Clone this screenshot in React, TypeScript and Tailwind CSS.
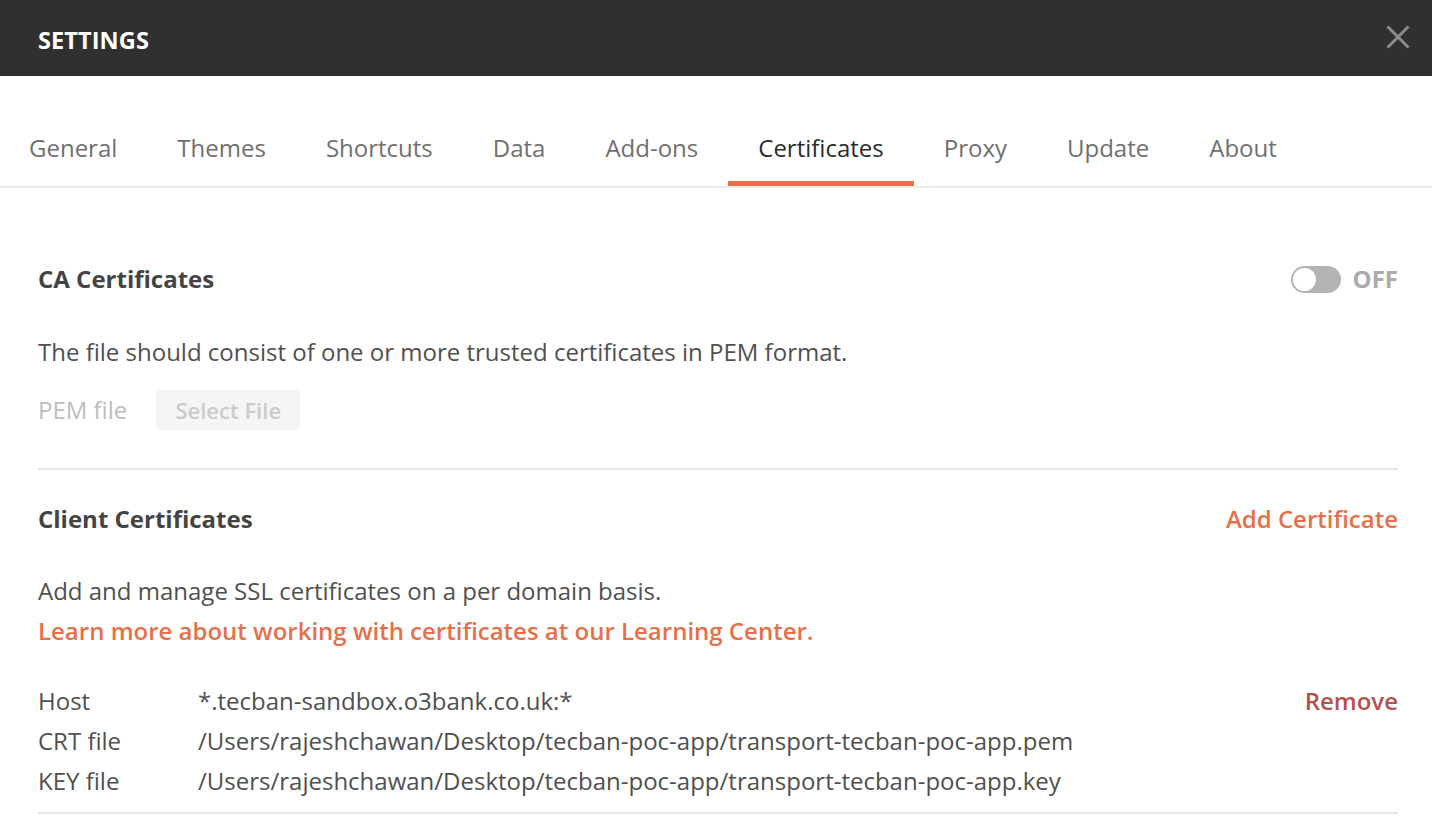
import React from "react";

const tabs = ["General", "Themes", "Shortcuts", "Data", "Add-ons", "Certificates", "Proxy", "Update", "About"];

export default function App() {
  return (
    <div className="w-[1432px] h-[828px] bg-white overflow-hidden" style={{ fontFamily: '"Open Sans", sans-serif' }}>
      <div className="h-[76px] bg-[#303030] flex items-center justify-between pl-[38px] pr-[22px]">
        <div className="text-white font-bold text-[23.5px] leading-[32px] pt-[3px] tracking-[0.1px]">SETTINGS</div>
        <svg width="24" height="24" viewBox="0 0 24 24" className="text-[#8c8c8c] mb-[3px]">
          <path d="M1.5 1.5 L22.5 22.5 M22.5 1.5 L1.5 22.5" stroke="currentColor" strokeWidth="3" />
        </svg>
      </div>
      <div className="mt-[56px] flex border-b-2 border-[#ebebeb] ml-[-1px]">
        {tabs.map((t) => (
          <div
            key={t}
            className={
              "px-[30px] text-[24px] leading-[32px] pb-[17px] border-b-[5px] " +
              (t === "Certificates" ? "text-[#2b2b2b] border-[#e5704a]" : "text-[#707070] border-transparent")
            }
          >
            {t}
          </div>
        ))}
      </div>
      <div className="pl-[38px] pr-[34px]">
        <div className="mt-[75px] flex items-center justify-between h-[32px]">
          <div className="text-[24px] font-bold text-[#444444] leading-[32px]">CA Certificates</div>
          <div className="flex items-center gap-[12px]">
            <div className="w-[50px] h-[27px] rounded-full bg-[#b3b3b3] relative">
              <div className="absolute left-[2px] top-[2px] w-[23px] h-[23px] rounded-full bg-white" />
            </div>
            <div className="text-[24px] font-bold text-[#ababab] leading-[32px]">OFF</div>
          </div>
        </div>
        <div className="mt-[41px] text-[24px] text-[#505050] leading-[32px]">
          The file should consist of one or more trusted certificates in PEM format.
        </div>
        <div className="mt-[22px] flex items-center gap-[29px] h-[40px]">
          <div className="text-[24px] text-[#bdbdbd] leading-[32px]">PEM file</div>
          <div className="w-[144px] h-[40px] rounded-[4px] bg-[#f5f5f5] flex items-center justify-center text-[22px] font-semibold text-[#cbcbcb]">
            Select File
          </div>
        </div>
        <div className="mt-[38px] border-t-2 border-[#e6e6e6]" />
        <div className="mt-[33px] flex items-center justify-between h-[32px]">
          <div className="text-[24px] font-bold text-[#444444] leading-[32px]">Client Certificates</div>
          <div className="text-[24px] font-semibold text-[#e5704a] leading-[32px]">Add Certificate</div>
        </div>
        <div className="mt-[40px] text-[24px] text-[#505050] leading-[32px]">
          Add and manage SSL certificates on a per domain basis.
        </div>
        <div className="mt-[8px] text-[24px] font-semibold text-[#e5704a] leading-[32px]">
          Learn more about working with certificates at our Learning Center.
        </div>
        <div className="mt-[34px] flex justify-between">
          <div className="grid grid-cols-[160px_1fr] text-[24px] text-[#505050] leading-[40px]">
            <div>Host</div>
            <div>*.tecban-sandbox.o3bank.co.uk:*</div>
            <div>CRT file</div>
            <div>/Users/rajeshchawan/Desktop/tecban-poc-app/transport-tecban-poc-app.pem</div>
            <div>KEY file</div>
            <div>/Users/rajeshchawan/Desktop/tecban-poc-app/transport-tecban-poc-app.key</div>
          </div>
          <div className="text-[24px] font-semibold text-[#b5504a] leading-[40px]">Remove</div>
        </div>
        <div className="mt-[11px] border-t-2 border-[#e6e6e6]" />
      </div>
    </div>
  );
}
